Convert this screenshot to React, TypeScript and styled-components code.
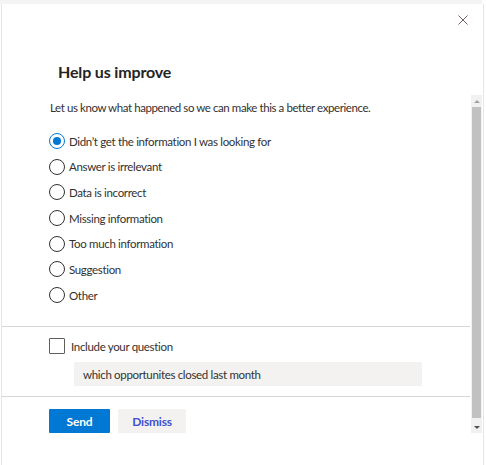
import React from "react";
import styled, { createGlobalStyle } from "styled-components";

const Global = createGlobalStyle`
  html, body { margin: 0; padding: 0; background: #ffffff; }
  body { font-family: "Segoe UI", Lato, "Liberation Sans", sans-serif; color: #323130; }
  * { box-sizing: border-box; }
`;

const Page = styled.div`
  width: 486px;
  height: 465px;
  display: flex;
  flex-direction: column;
  overflow: hidden;
`;

const TopStrip = styled.div`
  height: 4px;
  margin-right: 4px;
  background: #f4f4f4;
  box-shadow: 0 1px 2px rgba(0, 0, 0, 0.06);
  flex-shrink: 0;
`;

const Dialog = styled.div`
  flex: 1;
  margin-left: 1px;
  width: 483px;
  border-left: 1px solid #e6e6e6;
  border-right: 1px solid #e6e6e6;
  background: #ffffff;
  display: flex;
  flex-direction: column;
`;

const CloseRow = styled.div`
  height: 43px;
  display: flex;
  justify-content: flex-end;
  align-items: flex-start;
  padding: 11px 15px 0 0;
`;

const CloseButton = styled.button`
  width: 10px;
  height: 10px;
  padding: 0;
  border: none;
  background: transparent;
  display: flex;
  color: #6e5e66;
  cursor: pointer;
`;

const Title = styled.h2`
  margin: 0;
  height: 48px;
  padding: 15px 0 0 56px;
  font-size: 16px;
  letter-spacing: -0.15px;
  font-weight: 700;
  line-height: 20px;
  color: #252423;
`;

const Body = styled.div`
  height: 338px;
  display: flex;
  flex-direction: row;
`;

const Content = styled.div`
  width: 468px;
  display: flex;
  flex-direction: column;
  font-size: 11.5px;
  letter-spacing: -0.33px;
`;

const Description = styled.p`
  margin: 0;
  padding: 5px 0 0 48px;
  line-height: 16px;
  height: 38px;
  letter-spacing: -0.42px;
`;

const RadioList = styled.div`
  display: flex;
  flex-direction: column;
  gap: 9.7px;
  padding: 0 0 0 47px;
  height: 193px;
`;

const RadioRow = styled.label`
  display: flex;
  align-items: center;
  gap: 4px;
  height: 16px;
  color: #323130;
  line-height: 16px;
  padding-top: 1px;
`;

const RadioCircle = styled.span<{ $checked?: boolean }>`
  width: 16px;
  height: 16px;
  margin-top: -1px;
  border-radius: 50%;
  border: 1px solid ${(p) => (p.$checked ? "#0078d4" : "#323130")};
  display: flex;
  align-items: center;
  justify-content: center;
  flex-shrink: 0;
  &::after {
    content: "";
    width: 8px;
    height: 8px;
    border-radius: 50%;
    background: ${(p) => (p.$checked ? "#0078d4" : "transparent")};
  }
`;

const Divider = styled.hr`
  margin: 0;
  border: none;
  border-top: 1px solid #d6d6d6;
  height: 0;
`;

const IncludeSection = styled.div`
  height: 69px;
  padding: 11px 0 0 47px;
  display: flex;
  flex-direction: column;
  gap: 8px;
`;

const CheckRow = styled.label`
  display: flex;
  align-items: center;
  gap: 6px;
  height: 16px;
`;

const CheckBox = styled.span`
  width: 16px;
  height: 16px;
  border: 1px solid #605e5c;
  border-radius: 1px;
  flex-shrink: 0;
`;

const QuestionField = styled.div`
  margin-left: 25px;
  width: 348px;
  height: 24px;
  background: #f3f2f1;
  display: flex;
  align-items: center;
  padding-left: 9px;
  color: #323130;
`;

const Footer = styled.div`
  display: flex;
  gap: 8px;
  padding: 12px 0 0 47px;
`;

const Button = styled.button<{ $primary?: boolean }>`
  height: 24px;
  padding: 0;
  border: none;
  border-radius: 1px;
  font-family: inherit;
  font-size: 12px;
  letter-spacing: -0.2px;
  font-weight: 700;
  background: ${(p) => (p.$primary ? "#0078d4" : "#f3f2f1")};
  color: ${(p) => (p.$primary ? "#ffffff" : "#4050d0")};
  width: ${(p) => (p.$primary ? "61px" : "68px")};
  cursor: pointer;
`;

const Scrollbar = styled.div`
  width: 11px;
  margin-left: 1px;
  height: 338px;
  background: #f1f1f1;
  display: flex;
  flex-direction: column;
`;

const ScrollArrow = styled.div<{ $down?: boolean }>`
  height: 12px;
  display: flex;
  align-items: center;
  justify-content: center;
  &::after {
    content: "";
    width: 0;
    height: 0;
    border-left: 3px solid transparent;
    border-right: 3px solid transparent;
    ${(p) =>
      p.$down
        ? "border-top: 3px solid #505050;"
        : "border-bottom: 3px solid #a3a3a3;"}
  }
`;

const ScrollThumb = styled.div`
  flex: 1;
  margin: 0 1px;
  background: #c1c1c1;
  margin-bottom: 3px;
`;

const options = [
  "Didn’t get the information I was looking for",
  "Answer is irrelevant",
  "Data is incorrect",
  "Missing information",
  "Too much information",
  "Suggestion",
  "Other",
];

export default function App() {
  return (
    <Page>
      <Global />
      <TopStrip />
      <Dialog>
        <CloseRow>
          <CloseButton aria-label="Close">
            <svg width="10" height="10" viewBox="0 0 10 10">
              <path d="M0.5 0.5 L9.5 9.5 M9.5 0.5 L0.5 9.5" stroke="currentColor" strokeWidth="1" fill="none" />
            </svg>
          </CloseButton>
        </CloseRow>
        <Title>Help us improve</Title>
        <Body>
          <Content>
            <Description>Let us know what happened so we can make this a better experience.</Description>
            <RadioList>
              {options.map((o, i) => (
                <RadioRow key={o}>
                  <RadioCircle $checked={i === 0} />
                  {o}
                </RadioRow>
              ))}
            </RadioList>
            <Divider />
            <IncludeSection>
              <CheckRow>
                <CheckBox />
                Include your question
              </CheckRow>
              <QuestionField>which opportunites closed last month</QuestionField>
            </IncludeSection>
            <Divider />
            <Footer>
              <Button $primary>Send</Button>
              <Button>Dismiss</Button>
            </Footer>
          </Content>
          <Scrollbar>
            <ScrollArrow />
            <ScrollThumb />
            <ScrollArrow $down />
          </Scrollbar>
        </Body>
      </Dialog>
    </Page>
  );
}
